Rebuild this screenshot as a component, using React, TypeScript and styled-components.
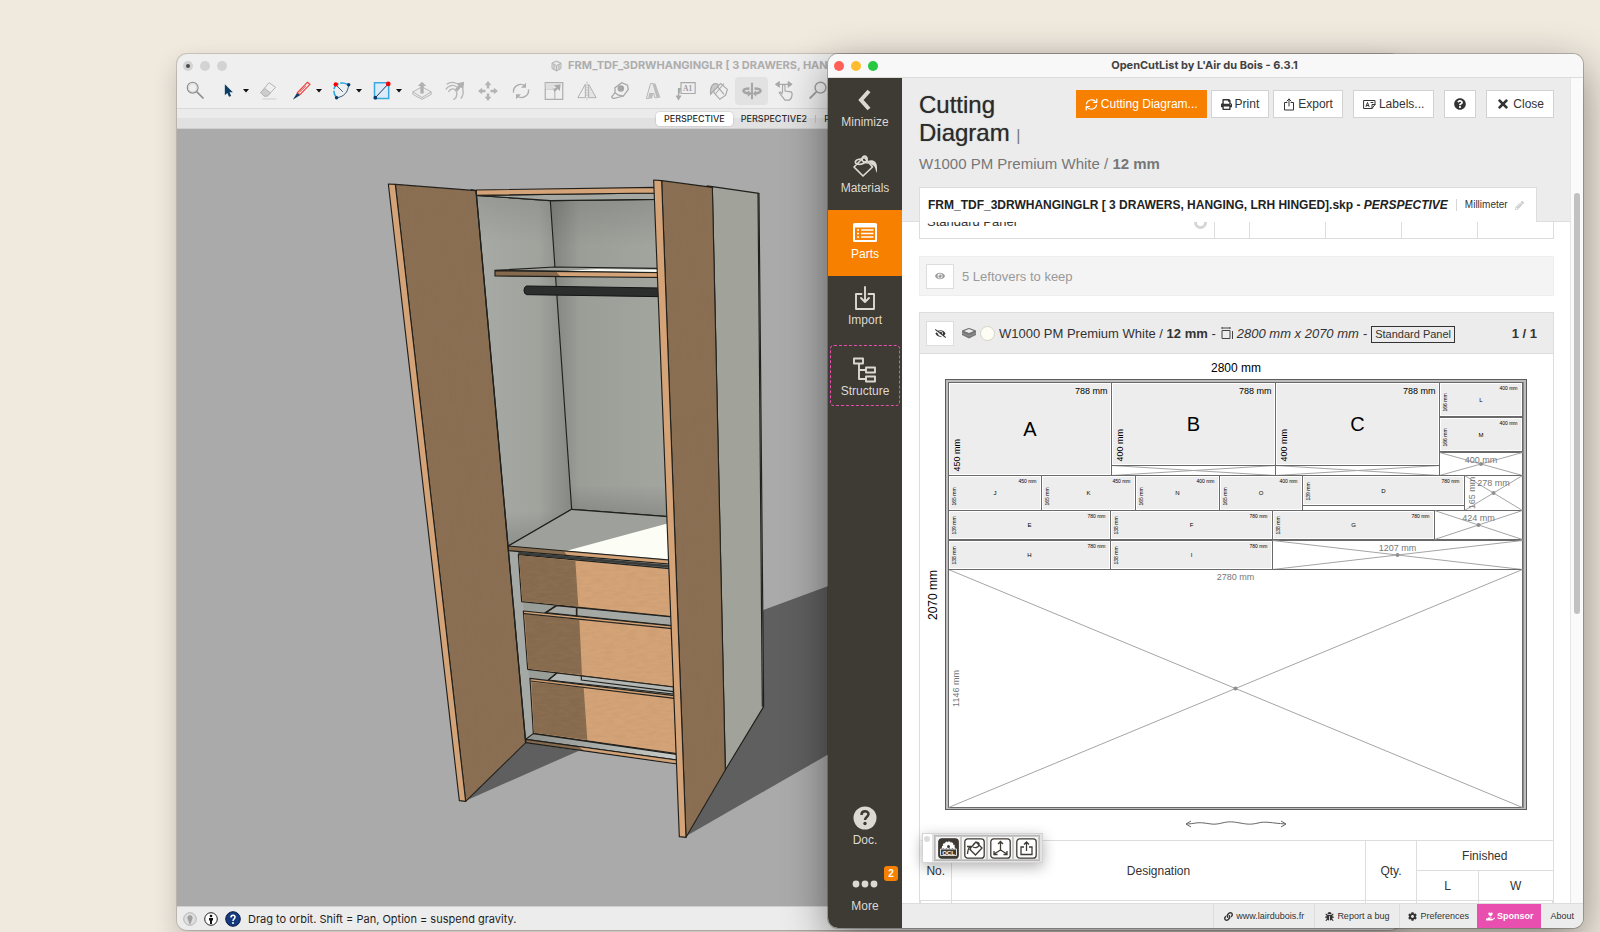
import React from "react";
import styled, { createGlobalStyle, css } from "styled-components";
import { FaBug, FaCog, FaEye, FaEyeSlash, FaHandHoldingHeart, FaLink, FaPencilAlt, FaPrint, FaQuestionCircle, FaTimes } from "react-icons/fa";

const helvetica = `"Liberation Sans", Arial, sans-serif`;
const system = `Inter, "Liberation Sans", sans-serif`;

const GlobalStyle = createGlobalStyle`
  * { box-sizing: border-box; }
  body { margin: 0; background: #f0e9de; }
  button { font: inherit; color: inherit; background: none; border: 0; padding: 0; margin: 0; }
  svg { display: block; flex: none; }
`;

const Desktop = styled.div`
  position: relative;
  height: 100vh;
  min-height: 760px;
  overflow: hidden;
  background: #f0e9de;
  font-family: ${helvetica};
`;

/* ---------- window chrome ---------- */

const Window = styled.section`
  position: absolute;
  display: flex;
  flex-direction: column;
  overflow: hidden;
  border-radius: 10px;
`;

const ModelWindow = styled(Window)`
  left: 177px;
  right: 200px;
  top: 54px;
  bottom: 2px;
  background: #efefef;
  box-shadow: 0 0 0 1px rgba(0, 0, 0, 0.14), 0 10px 24px rgba(0, 0, 0, 0.2);
`;

const ListWindow = styled(Window)`
  left: 828px;
  right: 17px;
  top: 54px;
  bottom: 4px;
  background: #ffffff;
  box-shadow: 0 0 0 1px rgba(0, 0, 0, 0.22), 0 14px 44px rgba(0, 0, 0, 0.44);
`;

const TitleBar = styled.header`
  display: flex;
  align-items: center;
  flex: none;
  height: 23px;
  padding-left: 6px;
  font: 700 11px/23px ${system};
  white-space: nowrap;
`;

const ListTitleBar = styled(TitleBar)`
  height: 24px;
  background: #f8f8f8;
  border-bottom: 1px solid #dcdcdc;
  color: #424242;
`;

const ModelTitleBar = styled(TitleBar)`
  color: #adadad;
`;

const Lights = styled.div`
  display: flex;
  gap: 7px;
  flex: none;
`;

const Light = styled.button<{ $color: string; $dot?: boolean }>`
  display: grid;
  place-items: center;
  width: 10px;
  height: 10px;
  border-radius: 50%;
  background: ${(p) => p.$color};
  ${(p) => p.$dot && css`
    &::after { content: ""; width: 4px; height: 4px; border-radius: 50%; background: #4b4b4b; }
  `}
`;

const ListTitle = styled.div`
  flex: 1;
  text-align: center;
  padding-right: 52px;
`;

const ModelTitle = styled.div`
  display: flex;
  align-items: center;
  gap: 6px;
  margin-left: 324px;
`;

/* ---------- model window ---------- */

const ToolRow = styled.div`
  display: flex;
  align-items: center;
  flex: none;
  height: 32px;
  padding: 0 0 4px 2px;
  border-bottom: 1px solid #d9d9d9;
`;

const Tool = styled.button<{ $menu?: boolean; $active?: boolean }>`
  display: flex;
  align-items: center;
  justify-content: flex-start;
  flex: none;
  width: ${(p) => (p.$menu ? 40 : 33)}px;
  height: 28px;
  padding-left: 7px;
  gap: 4px;
  border-radius: 4px;
  background: ${(p) => (p.$active ? "#e2e2e2" : "transparent")};
`;

const Scenes = styled.nav`
  display: flex;
  align-items: center;
  flex: none;
  height: 20px;
  padding-left: 479px;
  background: linear-gradient(#ebebeb 50%, #e1e1e1 50%);
  border-bottom: 1px solid #cfcfcf;
  font: 500 9px/14px ${system};
  color: #2e2e2e;
`;

const Scene = styled.button<{ $active?: boolean }>`
  height: 14px;
  padding: 0 8px;
  border-radius: 4px;
  background: ${(p) => (p.$active ? "#ffffff" : "transparent")};
  box-shadow: ${(p) => (p.$active ? "0 0 1px 1px rgba(0,0,0,.08)" : "none")};
`;

const SceneRule = styled.span`
  width: 1px;
  height: 8px;
  background: #c6c6c6;
`;

const Viewport = styled.div`
  flex: 1;
  min-height: 0;
  background: #aaaaaa;
  svg { width: 100%; height: 100%; }
`;

const StatusBar = styled.footer`
  display: flex;
  align-items: center;
  gap: 7px;
  flex: none;
  height: 24px;
  padding-left: 6px;
  background: #ececec;
  border-top: 1px solid #d0d0d0;
  font: 400 11px/20px ${system};
  color: #1e1e1e;
`;

/* ---------- cut list window ---------- */

const Columns = styled.div`
  display: flex;
  flex: 1;
  min-height: 0;
`;

const Sidebar = styled.nav`
  display: flex;
  flex-direction: column;
  justify-content: space-between;
  flex: none;
  width: 74px;
  background: #3e3a34;
`;

const NavItem = styled.button<{ $active?: boolean; $marked?: boolean }>`
  position: relative;
  display: flex;
  flex-direction: column;
  align-items: center;
  justify-content: flex-end;
  gap: 2px;
  width: 100%;
  height: 66px;
  padding-bottom: 14px;
  font-size: 12px;
  line-height: 16px;
  color: ${(p) => (p.$active ? "#ffffff" : "#dcd9d3")};
  background: ${(p) => (p.$active ? "#f78000" : "transparent")};
  ${(p) => p.$marked && css`
    gap: 0;
    width: 70px;
    height: 61px;
    margin: 3px 2px 0;
    padding-bottom: 6px;
    border: 1px dashed #e84fae;
    border-radius: 4px;
  `}
`;

const Badge = styled.span`
  position: absolute;
  top: 4px;
  right: 4px;
  width: 14px;
  height: 15px;
  border-radius: 3px;
  background: #f78000;
  color: #ffffff;
  font: 700 10px/15px ${helvetica};
  text-align: center;
`;

const Main = styled.div`
  display: flex;
  flex-direction: column;
  flex: 1;
  min-width: 0;
`;

const ScrollFrame = styled.div`
  display: flex;
  flex: 1;
  min-height: 0;
`;

const Page = styled.main`
  display: flex;
  flex-direction: column;
  flex: 1;
  min-width: 0;
`;

const Track = styled.div`
  flex: none;
  width: 13px;
  padding: 115px 3px 0;
  background: #fafafa;
  border-left: 1px solid #e6e6e6;
`;

const Thumb = styled.div`
  height: 421px;
  max-height: 100%;
  border-radius: 4px;
  background: #c1c1c1;
`;

const PageHeader = styled.div`
  flex: none;
  padding: 12px 16px 0 17px;
  background: #ececec;
  border-bottom: 1px solid #dddddd;
`;

const HeadRow = styled.div`
  display: flex;
  align-items: flex-start;
  justify-content: space-between;
  gap: 8px;
`;

const Heading = styled.h1`
  margin: 0;
  padding-top: 1px;
  font-size: 24px;
  line-height: 28px;
  font-weight: 400;
  color: #2b2b2b;
  text-shadow: 0 0 1px rgba(43, 43, 43, 0.6);
  small { font-size: 16px; line-height: 1px; color: #777777; text-shadow: none; }
`;

const Actions = styled.div`
  display: flex;
  flex: none;
  gap: 10px;
`;

const ActionGroup = styled.div`
  display: flex;
  gap: 4px;
`;

const Action = styled.button<{ $primary?: boolean }>`
  display: flex;
  align-items: center;
  gap: 3px;
  height: 28px;
  padding: 0 ${(p) => (p.$primary ? 8 : 9)}px;
  border: 1px solid ${(p) => (p.$primary ? "#f78000" : "#d2d2d2")};
  background: ${(p) => (p.$primary ? "#f78000" : "#ffffff")};
  color: ${(p) => (p.$primary ? "#ffffff" : "#333333")};
  font-size: 12px;
  line-height: 16px;
  white-space: nowrap;
`;

const Subtitle = styled.p`
  margin: 5px 0 11px;
  font-size: 15px;
  line-height: 24px;
  color: #777777;
`;

const FileTab = styled.div`
  display: inline-flex;
  align-items: center;
  height: 35px;
  margin-bottom: -1px;
  padding: 0 12px 0 8px;
  background: #ffffff;
  border: 1px solid #dddddd;
  border-bottom: 0;
  font-size: 12px;
  font-weight: 700;
  color: #222222;
  white-space: nowrap;
  vertical-align: top;
`;

const UnitButton = styled.button`
  display: flex;
  align-items: center;
  gap: 7px;
  margin-left: 8px;
  padding-left: 8px;
  border-left: 1px solid #d6d6d6;
  font-size: 10px;
  line-height: 12px;
  font-weight: 400;
  color: #333333;
  svg { color: #cccccc; }
`;

const PageBody = styled.div`
  flex: 1;
  min-height: 0;
  overflow: hidden;
  padding: 0 16px 0 17px;
  color: #333333;
`;

const SheetTable = styled.table`
  width: 100%;
  margin-top: -17px;
  table-layout: fixed;
  border-collapse: collapse;
  font-size: 13px;
  line-height: 16px;
  color: #333333;
  td { height: 33px; padding: 0 7px; border: 1px solid #dddddd; }
`;

const SheetCell = styled.span`
  display: flex;
  align-items: center;
  justify-content: space-between;
`;

const Ring = styled.i`
  width: 13px;
  height: 13px;
  border: 3px solid #d6d6d6;
  border-radius: 50%;
`;

const Leftovers = styled.div`
  display: flex;
  align-items: center;
  gap: 8px;
  height: 40px;
  margin: 17px 0 16px;
  padding: 0 6px;
  background: #f4f4f4;
  border: 1px solid #eeeeee;
  font-size: 13px;
  color: #999999;
`;

const EyeButton = styled.button`
  display: grid;
  place-items: center;
  flex: none;
  width: 28px;
  height: 25px;
  background: #ffffff;
  border: 1px solid #dddddd;
`;

const Panel = styled.section`
  border: 1px solid #dddddd;
`;

const PanelHead = styled.div`
  display: flex;
  align-items: center;
  height: 41px;
  padding: 0 16px 0 6px;
  background: #ececec;
  border-bottom: 1px solid #dddddd;
  font-size: 13px;
  color: #333333;
  white-space: nowrap;
  > strong { margin-left: auto; }
`;

const PanelTitle = styled.div`
  display: flex;
  align-items: center;
  gap: 4px;
  margin-left: 8px;
`;

const PanelSize = styled.span`
  display: flex;
  align-items: center;
  gap: 4px;
  padding-left: 1px;
`;

const Swatch = styled.i`
  width: 15px;
  height: 15px;
  border-radius: 50%;
  background: #fdfdf3;
  border: 1px solid #d4d4cc;
`;

const Kind = styled.span`
  margin-top: 2px;
  padding: 0 3px;
  border: 1px solid #333333;
  font-size: 11px;
  line-height: 15px;
`;

const Diagram = styled.svg`
  width: 100%;
  height: auto;
  font-family: ${helvetica};
`;

const PartsTable = styled.table`
  width: 100%;
  table-layout: fixed;
  border-collapse: collapse;
  font-size: 12px;
  line-height: 16px;
  th { height: 30px; padding: 0; font-weight: 400; border: 1px solid #dddddd; }
  th:first-child { border-left: 0; }
  th:last-child { border-right: 0; }
  td { height: 30px; border: 1px solid #dddddd; }
`;

const LinkBar = styled.footer`
  display: flex;
  justify-content: flex-end;
  flex: none;
  height: 25px;
  background: #ececec;
  border-top: 1px solid #dddddd;
  font-size: 9px;
  line-height: 12px;
  color: #333333;
`;

const barItem = css`
  display: flex;
  align-items: center;
  gap: 3px;
  padding: 0 8px;
  color: #333333;
  text-decoration: none;
  border-left: 1px solid #dddddd;
`;

const BarLink = styled.a<{ $pink?: boolean }>`
  ${barItem}
  ${(p) => p.$pink
    ? css`gap: 2px; background: #e84fae; border-color: #e84fae; color: #ffffff; font-weight: 700;`
    : css`padding: 0 10px;`}
`;

const BarButton = styled.button<{ $plain?: boolean }>`
  ${barItem}
  ${(p) => p.$plain && css`border-left: 0; padding: 0 9px;`}
`;

/* ---------- floating palette ---------- */

const Palette = styled.div`
  position: absolute;
  left: 922px;
  bottom: 69px;
  display: flex;
  gap: 2px;
  height: 30px;
  padding-right: 2px;
  background: #e2e2e2;
  border: 1px solid #d4d4d4;
  box-shadow: 0 4px 14px rgba(0, 0, 0, 0.3);
`;

const Grip = styled.div`
  width: 9px;
  padding: 2px 0 0 1px;
  background: #ffffff;
  &::after { content: ""; display: block; width: 6px; height: 6px; border-radius: 50%; background: #dcdcdc; }
`;

const PaletteButtons = styled.div`
  display: flex;
  margin: 1px 0;
  border: 1px solid #b8b8b8;
`;

const PaletteButton = styled.button`
  display: grid;
  place-items: center;
  width: 26px;
  background: #f4f4f4;
  border: 1px solid #c9c9c9;
`;

/* ---------- toolbar icons ---------- */

const toolArt = {
  search: <g stroke="#8d8d8d"><circle cx="8" cy="8" r="6.500" strokeWidth="1.400" /><circle cx="8" cy="8" r="5" stroke="#cfcfcf" strokeWidth="1" /><path d="M13 13l8 8" strokeWidth="2" /></g>,
  cursor: <path d="M7 4v13l3-2.600 2 4.600 2.600-1-2-4.600h4z" fill="#0d3c66" stroke="none" />,
  eraser: <g stroke="#b3b3b3"><path d="M2 14L12 2l8 5.500L10 18H6z" /><path d="M7 9l7 5.500L10 18H6l-4-4z" fill="#cdcdcd" /><path d="M4 21.500h17" stroke="#cfcfcf" /></g>,
  pencil: <g><path d="M18.500 1.500l3 2.500L9.500 16.500l-3-2.500z" stroke="#f04444" strokeWidth="1.500" /><path d="M16.500 6L9 13.500" stroke="#f04444" /><path d="M6 14.500l3.500 2.500L1 22.500z" fill="#0d3c66" stroke="none" /></g>,
  arc: <g><path d="M5.500 20C-.5 13 2 3 11 2.500c4-.5 6 .5 9 2.500" stroke="#37abe0" strokeWidth="2" strokeDasharray="9 2" /><path d="M5.500 20C15 19 19 13 20 5M5 5l8 8" stroke="#0d3c66" strokeWidth="1" /><circle cx="4.500" cy="4" r="2.600" fill="#f00" stroke="none" /><circle cx="20" cy="4.500" r="2.100" fill="#0d3c66" stroke="none" /><circle cx="5.500" cy="20" r="2.100" fill="#0d3c66" stroke="none" /></g>,
  rect: <g><path d="M3 2h17v19H3z" fill="#dcebf7" stroke="#37abe0" strokeWidth="1.800" /><path d="M4 20L19 4" stroke="#0d3c66" /><circle cx="19.500" cy="3.500" r="2.800" fill="#f00" stroke="none" /><circle cx="4" cy="20" r="2.200" fill="#0d3c66" stroke="none" /></g>,
  push: <g stroke="#b5b5b5"><path d="M1 13l11-6 11 6-11 7z" fill="#ececec" /><path d="M1 13v3l11 6 11-6v-3" /><path d="M10 15V6H7l5-5 5 5h-3v9z" fill="#b0b0b0" stroke="none" /></g>,
  offset: <g stroke="#b5b5b5"><path d="M2 4C6 1 10 1 14 3M4 13c5-7 13-2 9 7-1 1-2 2-3 2M1 10c3-5 9-6 13-3M21 9c2 5 0 10-2 12" strokeWidth="1.600" /><path d="M23 1l-1 9-3-2.500-4 5-3-2.500 4-5-3-2z" fill="#b0b0b0" stroke="none" /></g>,
  move: <path d="M12 0l4 5h-2.500v4h-3V5H8zM12 24l4-5h-2.500v-4h-3v4H8zM0 12l5-4v2.500h4v3H5V16zM24 12l-5-4v2.500h-4v3h4V16z" fill="#b3b3b3" stroke="none" />,
  rotate: <g stroke="#aeaeae" strokeWidth="1.700"><path d="M3 14C2 7 10 1 17 6M21 10c1 7-7 13-14 8" /><path d="M18 2v6h-6zM6 22v-6h6z" fill="#aeaeae" stroke="none" /></g>,
  scale: <g stroke="#aeaeae"><path d="M1.500 2h21v20h-21z" strokeWidth="1.500" /><path d="M1.500 9.500h11.500V22" /><path d="M2 2.500h16l-8 7H2z" fill="#dfdfdf" stroke="none" /><path d="M20 4l-1 8-2.500-2.500L13 13l-2-2 3.500-3.500L12 5z" fill="#a9a9a9" stroke="none" /></g>,
  flip: <g stroke="#b0b0b0"><path d="M10 4v16H1z" /><path d="M14 4v16h9z" fill="#e4e4e4" /><path d="M12 1v22" strokeDasharray="2 1" /></g>,
  tape: <g stroke="#a6a6a6" strokeWidth="1.500"><path d="M6 8l8-6 7 3 1 5-6 8-6-1-4-3z" /><path d="M6 14l-4 5 2 2 12-3" /><circle cx="13" cy="9" r="3.200" fill="#a6a6a6" /></g>,
  letter: <g><path d="M7 21L12 3h3l6 17h-4l-1-4h-4l-1 5z" fill="#bdbdbd" stroke="none" /><path d="M4 21L9 3h3l5 17h-3l-1-5H8l-1 6z" stroke="#b8b8b8" fill="#e9e9e9" /></g>,
  label: <g stroke="#a9a9a9" strokeWidth="1.400"><path d="M6 2h17v13H6z" /><path d="M6 9H3v10M.500 18h5L3 22z" fill="#a9a9a9" /><text x="8.500" y="12" fontSize="9" fontWeight="700" fill="#9c9c9c" stroke="none" fontFamily="Liberation Serif">A1</text></g>,
  paint: <g stroke="#a9a9a9" strokeWidth="1.400"><path d="M6 11L14 3l8 7-2 7-7 5-7-8z" /><path d="M8 4l10 12M18 3L8 15" /><path d="M11 4C4 1 1 8 2 16l4-5c3-2 6-4 5-7" fill="#c9c9c9" /></g>,
  orbit: <g stroke="#a6a6a6"><path d="M12 2v20" strokeWidth="2.500" /><path d="M9 9C0 9-1 14 8 15M15 9c9 0 10 5 1 6" strokeWidth="3" /><path d="M7 11l5 4-5 4zM17 11v8l-4-4z" fill="#a6a6a6" stroke="none" /></g>,
  pan: <g stroke="#a9a9a9" strokeWidth="1.400"><path d="M9 14V6c0-2 3-2 3 0v6l7 1c3 1 1 9-2 10h-5l-7-9c1-2 3 0 4 2" /><path d="M1 4l4-3v6zM20 4l-4-3v6z" fill="#a9a9a9" /><path d="M4 4h13" /></g>,
  zoom: <g stroke="#9e9e9e"><circle cx="15" cy="8" r="6.500" strokeWidth="1.700" /><path d="M10 13l-8 8" strokeWidth="2.200" /></g>,
};

type ToolName = keyof typeof toolArt;

const tools: { name: ToolName; menu?: boolean; active?: boolean }[] = [
  { name: "search" }, { name: "cursor", menu: true }, { name: "eraser" }, { name: "pencil", menu: true },
  { name: "arc", menu: true }, { name: "rect", menu: true }, { name: "push" }, { name: "offset" }, { name: "move" },
  { name: "rotate" }, { name: "scale" }, { name: "flip" }, { name: "tape" }, { name: "letter" }, { name: "label" },
  { name: "paint" }, { name: "orbit", active: true }, { name: "pan" }, { name: "zoom" },
];

const ToolIcon = ({ name }: { name: ToolName }) => (
  <svg width="20" height="20" viewBox="0 0 24 24" fill="none" strokeWidth="1.200">{toolArt[name]}</svg>
);

const Caret = () => <svg width="6" height="4" viewBox="0 0 6 4"><path d="M0 0h6L3 3.500z" fill="#111" /></svg>;

/* ---------- wardrobe model ---------- */

const ink = { stroke: "#1f1f1c", strokeWidth: 3.4, strokeLinejoin: "round" as const };

const Wardrobe = () => (
  <svg viewBox="0 0 1223 777" preserveAspectRatio="xMinYMin slice" role="img" aria-label="Wardrobe model">
    <defs>
      <linearGradient id="side" x1="0" x2="1"><stop offset="0" stopColor="#a7aaa5" /><stop offset=".65" stopColor="#a1a39d" /><stop offset="1" stopColor="#868883" /></linearGradient>
      <linearGradient id="back" x1="0" x2="1"><stop offset="0" stopColor="#80827d" /><stop offset=".25" stopColor="#9b9d97" /><stop offset="1" stopColor="#a3a59f" /></linearGradient>
      <linearGradient id="fall" x1="0" x2="0" y1="0" y2="1"><stop offset="0" stopColor="#000" stopOpacity=".1" /><stop offset=".15" stopColor="#000" stopOpacity="0" /><stop offset=".9" stopColor="#000" stopOpacity="0" /><stop offset="1" stopColor="#000" stopOpacity=".14" /></linearGradient>
      <linearGradient id="plinth" x1="0" x2="1"><stop offset="0" stopColor="#8d918d" /><stop offset="1" stopColor="#c9cdc9" /></linearGradient>
      <filter id="grainV" x="0" y="0" width="1" height="1"><feTurbulence type="fractalNoise" baseFrequency=".09 .008" numOctaves="2" seed="4" /><feColorMatrix values="0 0 0 0 .25  0 0 0 0 .17  0 0 0 0 .1  .4 0 0 0 -.13" /><feComposite in2="SourceGraphic" operator="in" /></filter>
      <filter id="grainH" x="0" y="0" width="1" height="1"><feTurbulence type="fractalNoise" baseFrequency=".03 .12" numOctaves="2" seed="9" /><feColorMatrix values="0 0 0 0 .4  0 0 0 0 .25  0 0 0 0 .12  .4 0 0 0 -.15" /><feComposite in2="SourceGraphic" operator="in" /></filter>
    </defs>
    <g transform="translate(193 31) scale(.33333)">
      <path d="M945 2030L1180 1350 1560 1210V1677z" fill="#5f5f5f" />
      <path d="M287 1922L467 1748 627 1772z" fill="#5f5f5f" />

      <path d="M1027 80L1167 100 1181 1640 1066 1830z" fill="#a1a39b" {...ink} />
      <path d="M1164 100L1177 1640" {...ink} />

      <path d="M316 90L541 122 605 1048 415 1160z" fill="url(#side)" />
      <path d="M316 90L541 122 605 1048 415 1160z" fill="url(#fall)" />
      <path d="M541 122L860 118 895 1070 605 1048z" fill="url(#back)" />
      <path d="M541 122L860 118 895 1070 605 1048z" fill="url(#fall)" />
      <path d="M318 106L541 122 605 1048 893 1070M541 122L860 118M605 1048L415 1158" fill="none" {...ink} />
      <path d="M318 106L860 99V118L541 122z" fill="#a4a7a2" {...ink} />
      <path d="M318 90L856 82V99L318 106z" fill="#d4a377" {...ink} />

      <path d="M375 331L555 321 865 325V338z" fill="#9da09b" {...ink} />
      <path d="M590 333L680 327 865 329V337z" fill="#fbfdf6" />
      <path d="M375 332L865 338V352L375 348z" fill="#866a4e" {...ink} />
      <path d="M560 337L863 340V350L570 348z" fill="#d4a377" />
      <path d="M470 378L868 384V410L470 404Q462 402 462 391T470 378z" fill="#2b2e2d" stroke="#141414" strokeWidth="3" />

      <path d="M415 1158L605 1048 895 1070V1200z" fill="#9da09b" />
      <path d="M590 1172L895 1090V1198z" fill="#fcfdf5" />
      <path d="M415 1158L605 1048 895 1070" fill="none" {...ink} />

      <path d="M415 1165L900 1210 922 1805 467 1745z" fill="#9a9e99" />
      <path d="M415 1170L447 1180 490 1715 467 1738z" fill="#a5a9a6" />
      <path d="M415 1158L898 1200V1212L415 1172z" fill="#866a4e" {...ink} />
      <path d="M583 1175L896 1202V1210L590 1184z" fill="#d4a377" />
      <path d="M445 1179L900 1219" stroke="#393c3a" strokeWidth="8" />

      <path d="M445 1184L899 1226 904 1370 455 1325z" fill="#d4a377" {...ink} />
      <path d="M447 1186L616 1202 625 1340 457 1323z" fill="#866a4e" />

      <path d="M560 1337L905 1371V1397L525 1358z" fill="#a5a9a6" {...ink} />
      <path d="M525 1360L558 1337M620 1342V1368" stroke="#2a211a" strokeWidth="5" />
      <path d="M460 1353L907 1398 913 1581 473 1528z" fill="#d4a377" {...ink} />
      <path d="M464 1363L628 1379 636 1545 475 1526z" fill="#866a4e" />
      <path d="M462 1361L907 1406" {...ink} />

      <path d="M560 1539L910 1581V1602L535 1560z" fill="#b4b8b5" {...ink} />
      <path d="M535 1560L560 1540M634 1547V1560L910 1595" fill="none" {...ink} />
      <path d="M480 1555L913 1607 920 1781 490 1720z" fill="#d4a377" {...ink} />
      <path d="M484 1566L641 1583 652 1740 492 1718z" fill="#866a4e" />
      <path d="M482 1563L913 1615" {...ink} />

      <path d="M467 1738L490 1721 920 1783V1800z" fill="url(#plinth)" {...ink} />
      <path d="M467 1738L922 1800V1812L467 1748z" fill="#866a4e" {...ink} />
      <path d="M627 1762L920 1802V1810L640 1770z" fill="#d4a377" />
      <g fill="#000" filter="url(#grainH)">
        <path d="M445 1184L899 1226 904 1370 455 1325z" />
        <path d="M460 1353L907 1398 913 1581 473 1528z" />
        <path d="M480 1555L913 1607 920 1781 490 1720z" />
      </g>

      <path d="M76 73L318 92 467 1748 287 1924z" fill="#8a6e52" {...ink} />
      <path d="M875 62L1027 82 1066 1830 948 2032z" fill="#8a6e52" {...ink} />
      <g fill="#000" filter="url(#grainV)">
        <path d="M76 73L318 92 467 1748 287 1924z" />
        <path d="M875 62L1027 82 1066 1830 948 2032z" />
      </g>
      <path d="M55 72L76 73 287 1924 268 1922z" fill="#d4a377" {...ink} />
      <path d="M851 60L875 62 948 2032 928 2030z" fill="#d4a377" {...ink} />
      <path d="M302 89L318 92 467 1748M1010 78L1027 80" fill="none" {...ink} strokeWidth="4" />
    </g>
  </svg>
);

/* ---------- cutting diagram ---------- */

type Piece = { id: string; x: number; y: number; w: number; h: number; len: string; wid: string; big?: boolean };

const pieces: Piece[] = [
  { id: "A", x: 28.5, y: 28.5, w: 163, h: 93, len: "788 mm", wid: "450 mm", big: true },
  { id: "B", x: 191.5, y: 28.5, w: 164, h: 83, len: "788 mm", wid: "400 mm", big: true },
  { id: "C", x: 355.5, y: 28.5, w: 164, h: 83, len: "788 mm", wid: "400 mm", big: true },
  { id: "L", x: 519.5, y: 28.5, w: 83, h: 34, len: "400 mm", wid: "166 mm" },
  { id: "M", x: 519.5, y: 63.5, w: 83, h: 34, len: "400 mm", wid: "166 mm" },
  { id: "J", x: 28.5, y: 121.5, w: 93, h: 35, len: "450 mm", wid: "165 mm" },
  { id: "K", x: 121.5, y: 121.5, w: 94, h: 35, len: "450 mm", wid: "165 mm" },
  { id: "N", x: 215.5, y: 121.5, w: 84, h: 35, len: "400 mm", wid: "165 mm" },
  { id: "O", x: 299.5, y: 121.5, w: 83, h: 35, len: "400 mm", wid: "165 mm" },
  { id: "D", x: 382.5, y: 121.5, w: 162, h: 30, len: "780 mm", wid: "139 mm" },
  { id: "E", x: 28.5, y: 156.5, w: 162, h: 29, len: "780 mm", wid: "139 mm" },
  { id: "F", x: 190.5, y: 156.5, w: 162, h: 29, len: "780 mm", wid: "138 mm" },
  { id: "G", x: 352.5, y: 156.5, w: 162, h: 29, len: "780 mm", wid: "138 mm" },
  { id: "H", x: 28.5, y: 186.5, w: 162, h: 29, len: "780 mm", wid: "138 mm" },
  { id: "I", x: 190.5, y: 186.5, w: 162, h: 29, len: "780 mm", wid: "138 mm" },
];

type Waste = { x: number; y: number; w: number; h: number; len?: string; wid?: string };

const wastes: Waste[] = [
  { x: 191.5, y: 111.5, w: 164, h: 10 },
  { x: 355.5, y: 111.5, w: 164, h: 10 },
  { x: 519.5, y: 98.5, w: 83, h: 23, len: "400 mm" },
  { x: 544.5, y: 121.5, w: 58, h: 35, len: "278 mm", wid: "165 mm" },
  { x: 514.5, y: 156.5, w: 88, h: 29, len: "424 mm" },
  { x: 352.5, y: 186.5, w: 250, h: 29, len: "1207 mm" },
  { x: 28.5, y: 215.5, w: 574, h: 238, len: "2780 mm", wid: "1146 mm" },
];

const PieceShape = ({ id, x, y, w, h, len, wid, big }: Piece) => {
  const size = big ? 9 : 5;
  const pad = big ? 4 : 5;
  const left = x + (big ? 11 : 7);
  const bottom = y + h - (big ? 4 : 5);
  return (
    <g>
      <rect x={x} y={y} width={w} height={h} fill="#fff" stroke="#6a6a6a" />
      <rect x={x + 1.5} y={y + 1.5} width={w - 3} height={h - 3} fill="#ededed" />
      <text x={x + w - pad} y={y + (big ? 11 : 7)} fontSize={size} textAnchor="end">{len}</text>
      <text x={x + w / 2} y={y + h / 2 + (big ? 7 : 2)} fontSize={big ? 20 : 6} textAnchor="middle">{id}</text>
      <text x={left} y={bottom} fontSize={size} transform={`rotate(-90 ${left} ${bottom})`}>{wid}</text>
    </g>
  );
};

const WasteShape = ({ x, y, w, h, len, wid }: Waste) => {
  const sideX = x + 10;
  const sideY = y + h / 2;
  return (
    <g>
      <rect x={x} y={y} width={w} height={h} fill="#fff" stroke="#6a6a6a" />
      <path d={`M${x} ${y}l${w} ${h}M${x} ${y + h}l${w} ${-h}`} stroke="#a5a5a5" />
      {len && <circle cx={x + w / 2} cy={y + h / 2} r="2" fill="#8f8f8f" />}
      {len && <text x={x + w / 2} y={y + 10} fontSize="9" fill="#777" textAnchor="middle">{len}</text>}
      {wid && <text x={sideX} y={sideY} fontSize="9" fill="#777" textAnchor="middle" transform={`rotate(-90 ${sideX} ${sideY})`}>{wid}</text>}
    </g>
  );
};

const CutDiagram = () => (
  <Diagram viewBox="0 0 633 486" role="img" aria-label="Cutting diagram of the 2800 mm by 2070 mm panel">
    <text x="316" y="18" fontSize="12" textAnchor="middle">2800 mm</text>
    <text x="17" y="241" fontSize="12" textAnchor="middle" transform="rotate(-90 17 241)">2070 mm</text>
    <rect x="25.500" y="25.500" width="581" height="430" fill="#bdbdbd" stroke="#5c5c5c" />
    <rect x="28.500" y="28.500" width="575" height="425" fill="#fff" stroke="#8a8a8a" />
    {wastes.map((w) => <WasteShape key={`${w.x}-${w.y}`} {...w} />)}
    {pieces.map((p) => <PieceShape key={p.id} {...p} />)}
    <path d="M266 470c8 0 10-2 18-1s10 2 18 0 12-1 18 0 10 2 18 0 12 0 28 1M271 467l-5 3 5 3M361 467l5 3-5 3" fill="none" stroke="#666" />
  </Diagram>
);

/* ---------- cut list icons ---------- */

const line = { fill: "none", stroke: "currentColor", strokeLinecap: "round" as const, strokeLinejoin: "round" as const };

const navIcons = {
  back: <svg width="26" height="24" viewBox="0 0 26 24"><path d="M17 3L9 12l8 9" {...line} strokeWidth="4" strokeLinecap="butt" strokeLinejoin="miter" /></svg>,
  bucket: <svg width="26" height="24" viewBox="0 0 26 24"><path d="M11 4L2 13l9 9 9.500-9L13 4zM9 5C3 5 2 9 5 10c4 1 9-1 10-4 1-5-5-5-5-1 0 3 3 4 7 4" {...line} strokeWidth="1.700" /><path d="M16 7c5-2 9 1 9 6v6c-2-3-1-7-5-8z" fill="currentColor" /></svg>,
  parts: <svg width="26" height="24" viewBox="0 0 26 24"><rect x="1" y="3" width="24" height="19" rx="1.500" fill="currentColor" /><path d="M3 7.500h20v12.500H3z" fill="#f78000" /><path d="M5 10h2M9 10h12.500M5 13.500h2M9 13.500h12.500M5 17h2M9 17h12.500" stroke="currentColor" strokeWidth="1.700" /></svg>,
  import: <svg width="26" height="24" viewBox="0 0 26 24"><path d="M9.500 8H4v15h18V8h-5.500M13 1v14M9 12l4 4 4-4" {...line} strokeWidth="1.900" /></svg>,
  tree: <svg width="26" height="26" viewBox="0 0 26 26"><path d="M2 1.500h9v5H2zM14 10.500h9v5h-9zM14 19.500h9v5h-9zM7 6.500V22h7M7 13h7" {...line} strokeWidth="1.900" /></svg>,
};

const DocIcon = () => (
  <svg width="24" height="24" viewBox="0 0 24 24"><circle cx="12" cy="12" r="11.500" fill="currentColor" /><path d="M8.500 9c0-5 7-4.500 7-1 0 3-3.500 3-3.500 6" fill="none" stroke="#3e3a34" strokeWidth="2.500" /><circle cx="12" cy="17.500" r="1.700" fill="#3e3a34" /></svg>
);

const MoreIcon = () => (
  <svg width="26" height="16" viewBox="0 0 26 16" fill="currentColor"><circle cx="4" cy="4" r="3.400" /><circle cx="13" cy="4" r="3.400" /><circle cx="22" cy="4" r="3.400" /></svg>
);

const RefreshIcon = () => (
  <svg width="13" height="13" viewBox="0 0 13 13"><path d="M1.500 6C2 2 8 0 11 4M11.800 1v3.500H8.500M11.500 7C11 11 5 13 2 9M1.200 12V8.500h3.300" {...line} strokeWidth="1.200" /></svg>
);

const ExportIcon = () => (
  <svg width="12" height="13" viewBox="0 0 12 13"><path d="M4 4.500H1.500V12h9V4.500H8M6 8V1M4 3l2-2 2 2" {...line} /></svg>
);

const TagIcon = () => (
  <svg width="13" height="11" viewBox="0 0 13 11"><path d="M1 1.500h11v4L9 9.500H1zM12 5.500H9v4M3 7.500l1.500-4 1.500 4M3.500 6.500h2M8 3.500h2" {...line} /></svg>
);

const LayersIcon = () => (
  <svg width="14" height="12" viewBox="0 0 14 12"><path d="M0 3.500L7 1l7 2.500V8l-7 3.500L0 8z" fill="#777" /><path d="M1 4l6-2.500L13 4 7 6.500z" fill="#ececec" stroke="#666" strokeWidth=".8" /><path d="M0 6l7 3 7-3" fill="none" stroke="#999" strokeWidth=".8" /></svg>
);

const SizeIcon = () => (
  <svg width="12" height="13" viewBox="0 0 12 13"><path d="M1 3.500h8v8H1zM1 1h8M1 0v2M9 0v2M11.500 4v8" fill="none" stroke="#444" /></svg>
);

const PaletteIcon = ({ kind }: { kind: "ocl" | "paint" | "axes" | "export" }) => {
  const dark = kind === "ocl";
  return (
    <svg width="21" height="21" viewBox="0 0 21 21" fill="none" stroke={dark ? "#fff" : "#3e3a34"} strokeWidth="1.300">
      <rect x=".8" y=".8" width="19.400" height="19.400" rx="3" fill={dark ? "#3e3a34" : "#fff"} stroke="#3e3a34" />
      {kind === "ocl" && <g><path d="M4.500 10a6 6 0 0 1 12 0z" fill="#fff" strokeDasharray="2 1" /><circle cx="10.500" cy="8.500" r="1.500" fill="#3e3a34" stroke="none" /><path d="M2.500 11h16v6.500h-16z" strokeWidth=".8" /><text x="10.500" y="16.500" textAnchor="middle" fontSize="6" fontWeight="700" fill="#fff" stroke="none" fontFamily="Liberation Sans">OCL</text></g>}
      {kind === "paint" && <path d="M7 9.500l5-5.500 6 6-6.500 7-6-6M9 7c2-4 7-3 6 0s-4 3-6 2M7 8c-3 1-3 4-3.500 8M3 8.500h3.500V12" />}
      {kind === "axes" && <path d="M10.500 12V4M8 6l2.500-2.500L13 6M10.500 12L4 16M4 13v3.500h3.500M10.500 12l6.500 4M17 13v3.500h-3.500" />}
      {kind === "export" && <path d="M8 9H5v7.500h11V9h-3M10.500 13V4M8 6.500L10.500 4 13 6.500" />}
    </svg>
  );
};

/* ---------- app ---------- */

export default function App() {
  return (
    <Desktop>
      <GlobalStyle />

      <ModelWindow aria-label="Model">
        <ModelTitleBar>
          <Lights>
            <Light $color="#d3d3d3" $dot aria-label="Close" />
            <Light $color="#d3d3d3" aria-label="Minimize" />
            <Light $color="#d3d3d3" aria-label="Zoom" />
          </Lights>
          <ModelTitle>
            <svg width="11" height="12" viewBox="0 0 11 12"><path d="M1 3l4.500-2L10 3v5.500L5.500 11 1 8.500zM1 3l4.500 2.500L10 3M5.500 5.500V11M3 4v6M8 4v6" fill="#ddd" stroke="#b5b5b5" /></svg>
            FRM_TDF_3DRWHANGINGLR [ 3 DRAWERS, HANGING, LRH HINGED].skp
          </ModelTitle>
        </ModelTitleBar>
        <ToolRow>
          {tools.map((t) => (
            <Tool key={t.name} $menu={t.menu} $active={t.active} aria-label={t.name}>
              <ToolIcon name={t.name} />
              {t.menu && <Caret />}
            </Tool>
          ))}
        </ToolRow>
        <Scenes>
          <Scene $active>PERSPECTIVE</Scene>
          <Scene>PERSPECTIVE2</Scene>
          <SceneRule />
          <Scene>PLAN</Scene>
        </Scenes>
        <Viewport><Wardrobe /></Viewport>
        <StatusBar>
          <svg width="14" height="16" viewBox="0 0 14 16"><circle cx="7" cy="8" r="6.300" fill="#dedede" stroke="#b5b5b5" /><path d="M7 14L4.500 7.500a2.600 2.600 0 1 1 5 0z" fill="#9f9f9f" /></svg>
          <svg width="14" height="16" viewBox="0 0 14 16"><circle cx="7" cy="8" r="6.300" fill="#fff" stroke="#222" /><circle cx="7" cy="5" r="1.300" fill="#111" /><path d="M5 7h4v2.500H8V13H6V9.500H5z" fill="#111" /></svg>
          <svg width="16" height="16" viewBox="0 0 16 16"><circle cx="8" cy="8" r="7.300" fill="#153a80" stroke="#0b1c40" /><path d="M6 6.500c0-3 4-3 4-.5C10 8 8 8 8 10" fill="none" stroke="#fff" strokeWidth="1.600" /><circle cx="8" cy="12" r="1" fill="#fff" /></svg>
          <span>Drag to orbit. Shift = Pan, Option = suspend gravity.</span>
        </StatusBar>
      </ModelWindow>

      <ListWindow aria-label="OpenCutList">
        <ListTitleBar>
          <Lights>
            <Light $color="#ff5f57" aria-label="Close" />
            <Light $color="#febc2e" aria-label="Minimize" />
            <Light $color="#28c840" aria-label="Zoom" />
          </Lights>
          <ListTitle>OpenCutList by L'Air du Bois - 6.3.1</ListTitle>
        </ListTitleBar>
        <Columns>
          <Sidebar>
            <div>
              <NavItem>{navIcons.back}Minimize</NavItem>
              <NavItem>{navIcons.bucket}Materials</NavItem>
              <NavItem $active>{navIcons.parts}Parts</NavItem>
              <NavItem>{navIcons.import}Import</NavItem>
              <NavItem $marked>{navIcons.tree}Structure</NavItem>
            </div>
            <div>
              <NavItem><DocIcon />Doc.</NavItem>
              <NavItem><MoreIcon />More<Badge>2</Badge></NavItem>
            </div>
          </Sidebar>
          <Main>
            <ScrollFrame>
              <Page>
                <PageHeader>
                  <HeadRow>
                    <Heading>Cutting Diagram <small>|</small></Heading>
                    <Actions>
                      <ActionGroup>
                        <Action $primary><RefreshIcon />Cutting Diagram...</Action>
                        <Action><FaPrint size={11} />Print</Action>
                        <Action><ExportIcon />Export</Action>
                      </ActionGroup>
                      <Action><TagIcon />Labels...</Action>
                      <Action aria-label="Help"><FaQuestionCircle size={12} /></Action>
                      <Action><FaTimes size={14} />Close</Action>
                    </Actions>
                  </HeadRow>
                  <Subtitle>W1000 PM Premium White / <b>12 mm</b></Subtitle>
                  <FileTab>
                    <span>FRM_TDF_3DRWHANGINGLR [ 3 DRAWERS, HANGING, LRH HINGED].skp - <i>PERSPECTIVE</i></span>
                    <UnitButton>Millimeter <FaPencilAlt size={9} /></UnitButton>
                  </FileTab>
                </PageHeader>
                <PageBody>
                  <SheetTable>
                    <colgroup><col /><col width="35" /><col width="76" /><col width="76" /><col width="76" /><col width="76" /></colgroup>
                    <tbody>
                      <tr><td><SheetCell>Standard Panel<Ring /></SheetCell></td><td /><td /><td /><td /><td /></tr>
                    </tbody>
                  </SheetTable>
                  <Leftovers>
                    <EyeButton aria-label="Show leftovers"><FaEye size={10} /></EyeButton>
                    5 Leftovers to keep
                  </Leftovers>
                  <Panel>
                    <PanelHead>
                      <EyeButton aria-label="Hide panel"><FaEyeSlash size={11} /></EyeButton>
                      <PanelTitle>
                        <LayersIcon />
                        <Swatch />
                        <span>W1000 PM Premium White / <b>12 mm</b> -</span>
                        <PanelSize><SizeIcon /><i>2800 mm x 2070 mm</i> -</PanelSize>
                        <Kind>Standard Panel</Kind>
                      </PanelTitle>
                      <strong>1 / 1</strong>
                    </PanelHead>
                    <CutDiagram />
                    <PartsTable>
                      <colgroup><col width="31" /><col /><col width="51" /><col width="62" /><col width="74" /></colgroup>
                      <thead>
                        <tr><th rowSpan={2}>No.</th><th rowSpan={2}>Designation</th><th rowSpan={2}>Qty.</th><th colSpan={2}>Finished</th></tr>
                        <tr><th>L</th><th>W</th></tr>
                      </thead>
                      <tbody><tr><td /><td /><td /><td /><td /></tr></tbody>
                    </PartsTable>
                  </Panel>
                </PageBody>
              </Page>
              <Track><Thumb /></Track>
            </ScrollFrame>
            <LinkBar>
              <BarLink href="#site"><FaLink size={9} />www.lairdubois.fr</BarLink>
              <BarLink href="#bug"><FaBug size={9} />Report a bug</BarLink>
              <BarButton><FaCog size={9} />Preferences</BarButton>
              <BarLink href="#sponsor" $pink><FaHandHoldingHeart size={9} />Sponsor</BarLink>
              <BarButton $plain>About</BarButton>
            </LinkBar>
          </Main>
        </Columns>
      </ListWindow>

      <Palette role="toolbar" aria-label="OpenCutList tools">
        <Grip />
        <PaletteButtons>
          <PaletteButton aria-label="OpenCutList"><PaletteIcon kind="ocl" /></PaletteButton>
          <PaletteButton aria-label="Smart paint"><PaletteIcon kind="paint" /></PaletteButton>
          <PaletteButton aria-label="Smart axes"><PaletteIcon kind="axes" /></PaletteButton>
          <PaletteButton aria-label="Smart export"><PaletteIcon kind="export" /></PaletteButton>
        </PaletteButtons>
      </Palette>
    </Desktop>
  );
}
